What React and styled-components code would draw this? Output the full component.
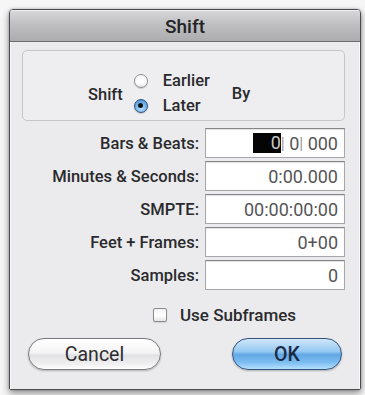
import React from "react";
import styled, { createGlobalStyle } from "styled-components";

const Global = createGlobalStyle`
  html, body { margin: 0; padding: 0; background: #f6f6f7; }
  body { font-family: Roboto, "Liberation Sans", sans-serif; }
  * { box-sizing: border-box; }
`;

const Page = styled.div`
  padding: 9px 4px 5px 9px;
`;

const Window = styled.div`
  width: 352px;
  border: 1px solid #4c4c4e;
  border-radius: 4px 4px 2px 2px;
  box-shadow: 0 3px 7px rgba(0, 0, 0, 0.45), 0 0 2px rgba(0, 0, 0, 0.25);
  overflow: hidden;
  display: flex;
  flex-direction: column;
`;

const TitleBar = styled.div`
  height: 32px;
  display: flex;
  align-items: center;
  justify-content: center;
  background: linear-gradient(to bottom, #d9d9db 0%, #c2c2c4 40%, #acacae 100%);
  border-bottom: 1px solid #6e6e70;
  box-shadow: inset 0 1px 0 #ececee;
`;

const Title = styled.span`
  font-size: 19px;
  font-weight: 500;
  color: #232325;
  margin-top: 1px;
`;

const Body = styled.div`
  background: #ebebee;
  box-shadow: inset 1px 0 0 #fafafa, inset -1px 0 0 #fafafa;
  padding: 8px 15px 19px 12px;
  display: flex;
  flex-direction: column;
`;

const GroupBox = styled.div`
  height: 71px;
  border: 1px solid #c6c6ca;
  border-radius: 5px;
  background: #eeeef1;
  padding: 17px 0 2px 65px;
  display: flex;
  align-items: center;
`;

const Label = styled.span`
  font-size: 16.5px;
  font-weight: 500;
  color: #2a2a2c;
  white-space: nowrap;
`;

const ShiftLabel = styled(Label)`
  margin-right: 11px;
  margin-top: 3px;
`;

const ByLabel = styled(Label)`
  margin-left: 22px;
`;

const RadioColumn = styled.div`
  display: flex;
  flex-direction: column;
`;

const RadioRow = styled.div`
  height: 25px;
  display: flex;
  align-items: center;
  gap: 15px;
`;

const Radio = styled.span`
  width: 14px;
  height: 14px;
  border-radius: 50%;
  flex: none;
  display: flex;
  align-items: center;
  justify-content: center;
  border: 1px solid ${(p) => (p.$checked ? "#2f4f7a" : "#8c8c90")};
  background: ${(p) =>
    p.$checked
      ? "radial-gradient(circle at 50% 70%, #b9e0fb 0%, #6fb1ea 55%, #3f84cc 100%)"
      : "linear-gradient(to bottom, #f4f4f4, #ffffff 60%, #e6e6e6)"};
  box-shadow: 0 1px 1px rgba(0, 0, 0, 0.15);
`;

const Dot = styled.span`
  width: 5px;
  height: 5px;
  border-radius: 50%;
  background: #111;
`;

const Fields = styled.div`
  margin-top: 7px;
  display: grid;
  grid-template-columns: 177px 140px;
  column-gap: 6px;
  row-gap: 3px;
  grid-auto-rows: 30px;
  align-items: center;
`;

const FieldLabel = styled(Label)`
  text-align: right;
`;

const Field = styled.div`
  height: 30px;
  background: #ffffff;
  border: 1px solid #a7a7aa;
  border-top-color: #858588;
  box-shadow: inset 0 1px 1px rgba(0, 0, 0, 0.12);
  display: flex;
  align-items: center;
  justify-content: flex-end;
  padding-right: 6px;
  font-size: 18px;
  color: #555557;
  white-space: pre;
`;

const Selection = styled.span`
  display: inline-block;
  width: 28px;
  height: 20px;
  line-height: 20px;
  background: #050505;
  color: #c8c8c8;
  text-align: right;
`;

const Sep = styled.span`
  color: #9a9a9c;
  font-size: 16px;
`;

const CheckRow = styled.label`
  margin-top: 15px;
  height: 20px;
  padding-left: 131px;
  display: flex;
  align-items: center;
  gap: 13px;
`;

const CheckBox = styled.span`
  width: 14px;
  height: 14px;
  border: 1px solid #8c8c90;
  border-radius: 2px;
  background: linear-gradient(to bottom, #f0f0f0, #ffffff 55%, #e4e4e4);
  box-shadow: 0 1px 1px rgba(0, 0, 0, 0.12);
`;

const CheckText = styled(Label)`
  font-size: 17px;
`;

const ButtonRow = styled.div`
  margin-top: 13px;
  padding: 0 3px 0 6px;
  display: flex;
  justify-content: space-between;
`;

const Button = styled.button`
  width: ${(p) => p.$w}px;
  height: 32px;
  border-radius: 16px;
  font-family: Roboto, "Liberation Sans", sans-serif;
  font-size: 19.5px;
  font-weight: ${(p) => (p.$primary ? 500 : 400)};
  color: ${(p) => (p.$primary ? "#1b2b46" : "#2c2c2e")};
  border: 1px solid ${(p) => (p.$primary ? "#34537f" : "#7a7a7d")};
  background: ${(p) =>
    p.$primary
      ? "linear-gradient(to bottom, #cfe7fb 0%, #94c8f1 42%, #62a8e6 52%, #7dbdf0 78%, #b4e0fc 100%)"
      : "linear-gradient(to bottom, #ffffff 0%, #f4f4f5 45%, #e2e2e4 55%, #f1f1f2 85%, #ffffff 100%)"};
  box-shadow: 0 1px 2px rgba(0, 0, 0, 0.25);
  padding: 0;
  cursor: pointer;
`;

export default function App() {
  return (
    <>
      <Global />
      <Page>
        <Window>
          <TitleBar>
            <Title>Shift</Title>
          </TitleBar>
          <Body>
            <GroupBox>
              <ShiftLabel>Shift</ShiftLabel>
              <RadioColumn>
                <RadioRow>
                  <Radio />
                  <Label>Earlier</Label>
                </RadioRow>
                <RadioRow>
                  <Radio $checked>
                    <Dot />
                  </Radio>
                  <Label>Later</Label>
                </RadioRow>
              </RadioColumn>
              <ByLabel>By</ByLabel>
            </GroupBox>
            <Fields>
              <FieldLabel>Bars &amp; Beats:</FieldLabel>
              <Field>
                <Selection>0</Selection>
                <Sep>|</Sep> 0<Sep>|</Sep> 000
              </Field>
              <FieldLabel>Minutes &amp; Seconds:</FieldLabel>
              <Field>0:00.000</Field>
              <FieldLabel>SMPTE:</FieldLabel>
              <Field>00:00:00:00</Field>
              <FieldLabel>Feet + Frames:</FieldLabel>
              <Field>0+00</Field>
              <FieldLabel>Samples:</FieldLabel>
              <Field>0</Field>
            </Fields>
            <CheckRow>
              <CheckBox />
              <CheckText>Use Subframes</CheckText>
            </CheckRow>
            <ButtonRow>
              <Button $w={133}>Cancel</Button>
              <Button $w={110} $primary>
                OK
              </Button>
            </ButtonRow>
          </Body>
        </Window>
      </Page>
    </>
  );
}
